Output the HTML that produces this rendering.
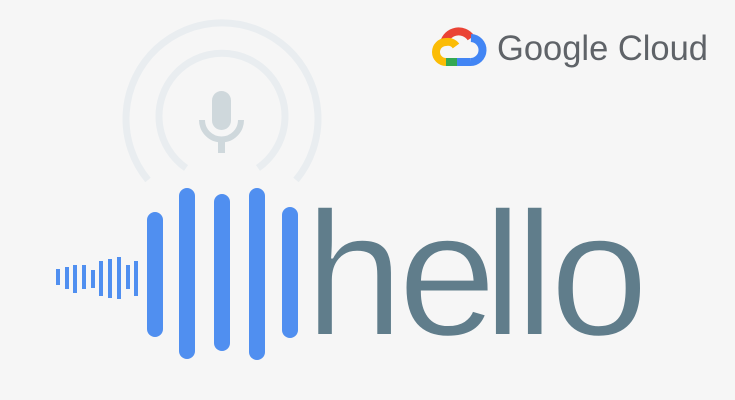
<!DOCTYPE html>
<html><head><meta charset="utf-8"><style>
html,body{margin:0;padding:0;background:#f6f6f6;}
body{width:735px;height:400px;overflow:hidden;position:relative;}
svg{position:absolute;left:0;top:0;}
</style></head><body>
<svg width="735" height="400" viewBox="0 0 735 400" xmlns="http://www.w3.org/2000/svg">
  <g fill="none" stroke="#e9edf0" stroke-width="7">
    <path d="M148 180 A96 96 0 1 1 296 180"/>
    <path d="M186 168 A63 63 0 1 1 258 168"/>
  </g>
  <g fill="none" stroke="#cfd8dc">
    <rect x="212" y="91" width="19" height="39" rx="9.5" fill="#cfd8dc" stroke="none"/>
    <path d="M202 120 A19.5 19.5 0 0 0 241 120" stroke-width="6"/>
    <line x1="221.5" y1="140" x2="221.5" y2="153" stroke-width="7"/>
  </g>
  <g fill="#508ff0">
    <rect x="147" y="212" width="16" height="125" rx="8"/>
    <rect x="179" y="188" width="16" height="171" rx="8"/>
    <rect x="214" y="194" width="16" height="157" rx="8"/>
    <rect x="249" y="188" width="16" height="172" rx="8"/>
    <rect x="282" y="207" width="16" height="131" rx="8"/>
    <rect x="56" y="269" width="4" height="16"/>
    <rect x="65" y="267" width="4" height="22"/>
    <rect x="73" y="265" width="4" height="28"/>
    <rect x="82" y="265" width="4" height="24"/>
    <rect x="91" y="270" width="4" height="18"/>
    <rect x="99" y="261" width="4" height="35"/>
    <rect x="108" y="259" width="4" height="39"/>
    <rect x="117" y="257" width="4" height="42"/>
    <rect x="126" y="265" width="4" height="24"/>
    <rect x="134" y="261" width="4" height="35"/>
  </g>
  <text y="335" font-family="Liberation Sans, Arial, sans-serif" font-size="177" fill="#607d8b" stroke="#f6f6f6" stroke-width="2"><tspan x="305">h</tspan><tspan x="398">e</tspan><tspan x="483">l</tspan><tspan x="515">l</tspan><tspan x="550">o</tspan></text>
  <g fill="none" stroke-width="8" stroke-linecap="butt">
    <path d="M444 43 A15 15 0 0 1 471 38" stroke="#ea4335"/>
    <path d="M471 38 A11.5 11.5 0 0 1 470 62" stroke="#4285f4"/>
    <line x1="470" y1="62" x2="457" y2="62" stroke="#4285f4"/>
    <line x1="457" y1="62" x2="446" y2="62" stroke="#34a853"/>
    <path d="M446 62 A10 10 0 0 1 446 42 A10 10 0 0 1 456 46" stroke="#fbbc05"/>
  </g>
  <text x="497" y="60" font-family="Liberation Sans, Arial, sans-serif" font-size="35" fill="#5f6368" textLength="211" lengthAdjust="spacingAndGlyphs">Google Cloud</text>
</svg>
</body></html>
